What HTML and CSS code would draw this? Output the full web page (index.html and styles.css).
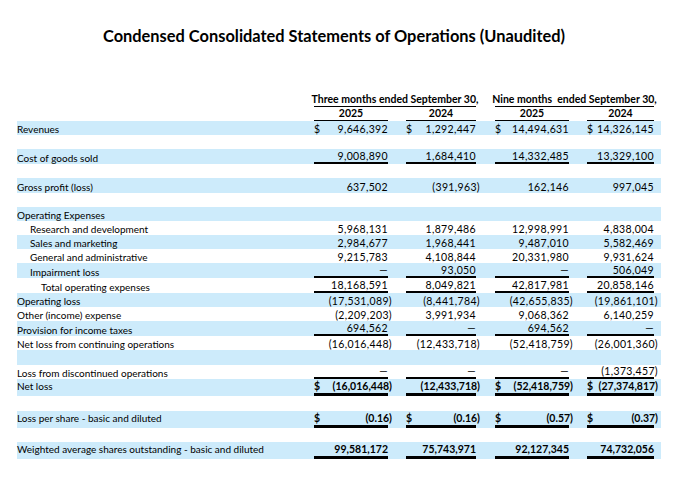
FILE: index.html
```html
<!DOCTYPE html>
<html lang="en">
<head>
<meta charset="utf-8">
<title>Condensed Consolidated Statements of Operations</title>
<link rel="stylesheet" href="styles.css">
</head>
<body>
<main class="page">
  <h1 class="title">Condensed Consolidated Statements of Operations (Unaudited)</h1>
  <div class="stmt">
    <div class="row head1">
      <div class="hd span-a">Three months ended September 30,</div>
      <div class="hd span-b">Nine months&nbsp; ended September 30,</div>
    </div>
    <div class="row head2">
      <div class="yr c1">2025</div>
      <div class="yr c2">2024</div>
      <div class="yr c3">2025</div>
      <div class="yr c4">2024</div>
    </div>

    <div class="row band">
      <div class="lbl">Revenues</div>
      <div class="v c1"><span class="cur">$</span><span class="n">9,646,392</span></div>
      <div class="v c2"><span class="cur">$</span><span class="n">1,292,447</span></div>
      <div class="v c3"><span class="cur">$</span><span class="n">14,494,631</span></div>
      <div class="v c4"><span class="cur">$</span><span class="n">14,326,145</span></div>
    </div>
    <div class="row"></div>
    <div class="row band ul">
      <div class="lbl">Cost of goods sold</div>
      <div class="v c1"><span class="n">9,008,890</span></div>
      <div class="v c2"><span class="n">1,684,410</span></div>
      <div class="v c3"><span class="n">14,332,485</span></div>
      <div class="v c4"><span class="n">13,329,100</span></div>
    </div>
    <div class="row"></div>
    <div class="row band">
      <div class="lbl">Gross profit (loss)</div>
      <div class="v c1"><span class="n">637,502</span></div>
      <div class="v c2"><span class="n neg">(391,963)</span></div>
      <div class="v c3"><span class="n">162,146</span></div>
      <div class="v c4"><span class="n">997,045</span></div>
    </div>
    <div class="row"></div>
    <div class="row band">
      <div class="lbl">Operating Expenses</div>
    </div>
    <div class="row">
      <div class="lbl in1">Research and development</div>
      <div class="v c1"><span class="n">5,968,131</span></div>
      <div class="v c2"><span class="n">1,879,486</span></div>
      <div class="v c3"><span class="n">12,998,991</span></div>
      <div class="v c4"><span class="n">4,838,004</span></div>
    </div>
    <div class="row band">
      <div class="lbl in1">Sales and marketing</div>
      <div class="v c1"><span class="n">2,984,677</span></div>
      <div class="v c2"><span class="n">1,968,441</span></div>
      <div class="v c3"><span class="n">9,487,010</span></div>
      <div class="v c4"><span class="n">5,582,469</span></div>
    </div>
    <div class="row">
      <div class="lbl in1">General and administrative</div>
      <div class="v c1"><span class="n">9,215,783</span></div>
      <div class="v c2"><span class="n">4,108,844</span></div>
      <div class="v c3"><span class="n">20,331,980</span></div>
      <div class="v c4"><span class="n">9,931,624</span></div>
    </div>
    <div class="row band ul">
      <div class="lbl in1">Impairment loss</div>
      <div class="v c1"><span class="n">—</span></div>
      <div class="v c2"><span class="n">93,050</span></div>
      <div class="v c3"><span class="n">—</span></div>
      <div class="v c4"><span class="n">506,049</span></div>
    </div>
    <div class="row ul">
      <div class="lbl in2">Total operating expenses</div>
      <div class="v c1"><span class="n">18,168,591</span></div>
      <div class="v c2"><span class="n">8,049,821</span></div>
      <div class="v c3"><span class="n">42,817,981</span></div>
      <div class="v c4"><span class="n">20,858,146</span></div>
    </div>
    <div class="row band">
      <div class="lbl">Operating loss</div>
      <div class="v c1"><span class="n neg">(17,531,089)</span></div>
      <div class="v c2"><span class="n neg">(8,441,784)</span></div>
      <div class="v c3"><span class="n neg">(42,655,835)</span></div>
      <div class="v c4"><span class="n neg">(19,861,101)</span></div>
    </div>
    <div class="row">
      <div class="lbl">Other (income) expense</div>
      <div class="v c1"><span class="n neg">(2,209,203)</span></div>
      <div class="v c2"><span class="n">3,991,934</span></div>
      <div class="v c3"><span class="n">9,068,362</span></div>
      <div class="v c4"><span class="n">6,140,259</span></div>
    </div>
    <div class="row band ul">
      <div class="lbl">Provision for income taxes</div>
      <div class="v c1"><span class="n">694,562</span></div>
      <div class="v c2"><span class="n">—</span></div>
      <div class="v c3"><span class="n">694,562</span></div>
      <div class="v c4"><span class="n">—</span></div>
    </div>
    <div class="row">
      <div class="lbl">Net loss from continuing operations</div>
      <div class="v c1"><span class="n neg">(16,016,448)</span></div>
      <div class="v c2"><span class="n neg">(12,433,718)</span></div>
      <div class="v c3"><span class="n neg">(52,418,759)</span></div>
      <div class="v c4"><span class="n neg">(26,001,360)</span></div>
    </div>
    <div class="row band"></div>
    <div class="row ul">
      <div class="lbl">Loss from discontinued operations</div>
      <div class="v c1"><span class="n">—</span></div>
      <div class="v c2"><span class="n">—</span></div>
      <div class="v c3"><span class="n">—</span></div>
      <div class="v c4"><span class="n neg">(1,373,457)</span></div>
    </div>
    <div class="row band thick bold">
      <div class="lbl">Net loss</div>
      <div class="v c1"><span class="cur">$</span><span class="n neg">(16,016,448)</span></div>
      <div class="v c2"><span class="n neg">(12,433,718)</span></div>
      <div class="v c3"><span class="cur">$</span><span class="n neg">(52,418,759)</span></div>
      <div class="v c4"><span class="cur">$</span><span class="n neg">(27,374,817)</span></div>
    </div>
    <div class="row"></div>
    <div class="row band thick bold">
      <div class="lbl">Loss per share - basic and diluted</div>
      <div class="v c1"><span class="cur">$</span><span class="n neg">(0.16)</span></div>
      <div class="v c2"><span class="cur">$</span><span class="n neg">(0.16)</span></div>
      <div class="v c3"><span class="cur">$</span><span class="n neg">(0.57)</span></div>
      <div class="v c4"><span class="cur">$</span><span class="n neg">(0.37)</span></div>
    </div>
    <div class="row"></div>
    <div class="row band thick bold">
      <div class="lbl">Weighted average shares outstanding - basic and diluted</div>
      <div class="v c1"><span class="n">99,581,172</span></div>
      <div class="v c2"><span class="n">75,743,971</span></div>
      <div class="v c3"><span class="n">92,127,345</span></div>
      <div class="v c4"><span class="n">74,732,056</span></div>
    </div>
  </div>
</main>
</body>
</html>
```

FILE: styles.css
```css
html, body {
  margin: 0;
  padding: 0;
  background: #ffffff;
}

.page {
  padding: 24px 15px 0 17px;
  font-family: Lato, "Liberation Sans", sans-serif;
  color: #000;
}

.title {
  margin: 0;
  padding-right: 10px;
  font-size: 16.4px;
  line-height: 24px;
  font-weight: 700;
  text-align: center;
}

.stmt {
  margin-top: 44px;
  width: 644px;
  font-size: 10.5px;
  line-height: 12px;
}

.row {
  display: grid;
  grid-template-columns: 297px 74px 18px 70px 19px 74px 18px 67px 7px;
  height: 14.2px;
  box-sizing: border-box;
}

.row.band { background: #cdebfb; }
.row.ul { height: 14.8px; }
.row.thick { height: 17px; }

.head1 { height: 15px; }
.head2 { height: 14px; }

.hd, .yr {
  font-weight: 700;
  text-align: center;
  border-bottom: 1px solid #000;
  display: flex;
  align-items: flex-end;
  justify-content: center;
  white-space: nowrap;
  padding-bottom: 1px;
}
.span-a { grid-column: 2 / 5; }
.span-b { grid-column: 6 / 9; }

.lbl {
  grid-column: 1;
  display: flex;
  align-items: flex-end;
  white-space: nowrap;
  font-size: 10px;
}
.in1 { padding-left: 13px; }
.in2 { padding-left: 24px; }

.v {
  display: flex;
  align-items: flex-end;
  justify-content: flex-end;
  white-space: nowrap;
  box-sizing: border-box;
  letter-spacing: 0.35px;
}
.c1 { grid-column: 2; }
.c2 { grid-column: 4; }
.c3 { grid-column: 6; }
.c4 { grid-column: 8; }

.cur { margin-right: auto; }
.n.neg { margin-right: -4px; }

.row.ul .v { border-bottom: 2px solid #000; }
.row.thick .v { border-bottom: 3px solid #000; padding-bottom: 1px; }
.row.thick .lbl { padding-bottom: 4px; }
.row.bold .v { font-weight: 700; letter-spacing: 0; }
```
